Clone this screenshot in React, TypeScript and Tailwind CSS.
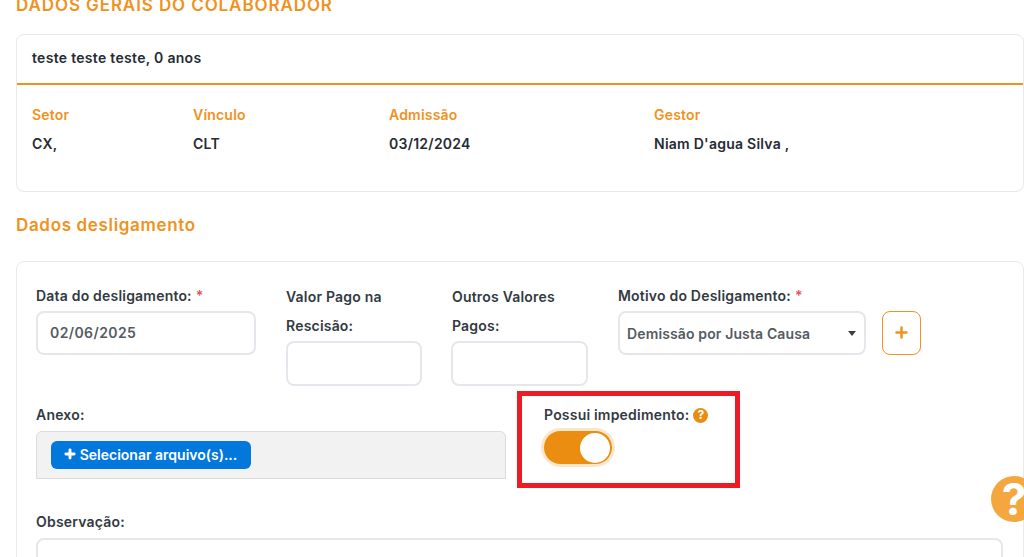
import { Plus } from "lucide-react";

const FONT = "font-['Inter','Liberation_Sans',sans-serif]";
const INPUT = "rounded-lg border-2 border-[#e4e7ec] bg-white";
const LABEL = "block text-[14px] leading-[20px] font-semibold tracking-[0.2px] text-[#333a42]";

function Required() {
  return <span className="ml-1 text-[#e8505b]">*</span>;
}

function Info({ label, value, className }: { label: string; value: string; className: string }) {
  return (
    <div className={className}>
      <div className="text-[14px] leading-[20px] font-semibold tracking-[0.2px] text-[#f0921e]">{label}</div>
      <div className="mt-[9px] text-[14px] leading-[20px] font-semibold tracking-[0.25px] text-[#262c33]">{value}</div>
    </div>
  );
}

export default function App() {
  return (
    <div className={`relative h-[557px] w-[1024px] overflow-hidden bg-white ${FONT}`}>
      <div className="pl-4">
        {/* Dados gerais */}
        <h2 className="-mt-[6px] text-[17px] leading-[22px] font-semibold tracking-[0.9px] text-[#f0921e]">
          DADOS GERAIS DO COLABORADOR
        </h2>
        <div className="mt-[18px] h-[158px] rounded-lg border border-[#e9e9e9] bg-white">
          <div className="flex h-[50px] items-center border-b-2 border-[#f0921e] pb-[4px] pl-[15px] text-[14px] font-semibold tracking-[0.3px] text-[#262c33]">
            teste teste teste, 0 anos
          </div>
          <div className="flex pt-[20px] pl-[15px]">
            <Info label="Setor" value="CX," className="w-[161px]" />
            <Info label="Vínculo" value="CLT" className="w-[196px]" />
            <Info label="Admissão" value="03/12/2024" className="w-[265px]" />
            <Info label="Gestor" value="Niam D'agua Silva ," className="w-[300px]" />
          </div>
        </div>

        {/* Dados desligamento */}
        <h2 className="mt-[21px] text-[17px] leading-[24px] font-semibold tracking-[0.66px] text-[#f0921e]">Dados desligamento</h2>
        <div className="mt-[24px] h-[320px] rounded-lg border border-[#e9e9e9] bg-white pt-[24px] pl-[19px]">
          <div className="flex items-start">
            <div className="w-[250px]">
              <label className={LABEL}>
                Data do desligamento:
                <Required />
              </label>
              <div className={`mt-[5px] flex h-[44px] w-[220px] items-center pb-[2px] pl-3 text-[14px] font-semibold tracking-[0.4px] text-[#545b63] ${INPUT}`}>
                02/06/2025
              </div>
            </div>
            <div className="-mt-1 w-[165px]">
              <label className={`${LABEL} !leading-[29px]`}>
                Valor Pago na
                <br />
                Rescisão:
              </label>
              <div className={`mt-[1px] h-[45px] w-[136px] ${INPUT}`} />
            </div>
            <div className="-mt-1 w-[167px]">
              <label className={`${LABEL} !leading-[29px] pl-px`}>
                Outros Valores
                <br />
                Pagos:
              </label>
              <div className={`mt-[1px] h-[45px] w-[137px] ${INPUT}`} />
            </div>
            <div>
              <label className={LABEL}>
                Motivo do Desligamento:
                <Required />
              </label>
              <div className="mt-[5px] flex items-center gap-4">
                <div className={`flex h-[44px] w-[248px] items-center justify-between pr-[8px] pl-[7px] text-[14px] font-semibold tracking-[0.13px] text-[#545b63] ${INPUT}`}>
                  Demissão por Justa Causa
                  <span className="h-0 w-0 border-x-[4px] border-t-[5px] border-x-transparent border-t-[#3a4048]" />
                </div>
                <div className="flex h-[44px] w-[39px] items-center justify-center rounded-lg border border-[#f0921e] pb-[2px] text-[#f0921e]">
                  <Plus size={17} strokeWidth={3.5} />
                </div>
              </div>
            </div>
          </div>

          <div className="mt-[19px] flex items-start">
            <div className="w-[508px]">
              <label className={LABEL}>Anexo:</label>
              <div className="mt-[6px] h-[48px] w-[470px] rounded-t-md border border-[#dcdcdc] bg-[#f2f2f2] pt-[9px] pl-[14px]">
                <div className="flex h-[28px] w-[200px] items-center justify-center gap-[3px] rounded-md bg-[#0277dc] pr-[2px] pb-[2px] text-[14px] font-semibold text-white">
                  <Plus size={14} strokeWidth={5} />
                  Selecionar arquivo(s)...
                </div>
              </div>
            </div>
            <div>
              <div className="flex items-center gap-1">
                <label className={LABEL}>Possui impedimento:</label>
                <span className="flex h-[15px] w-[15px] items-center justify-center rounded-full bg-[#ea8d10] text-[12px] leading-none font-bold text-white">
                  ?
                </span>
              </div>
              <div className="mt-[6px] flex h-[33px] w-[68px] items-center justify-end rounded-full bg-[#ea8d10] pr-[2px] shadow-[0_0_0_3px_#fbe6c9]">
                <span className="h-[30px] w-[30px] rounded-full bg-white" />
              </div>
            </div>
          </div>

          <label className={`${LABEL} mt-[33px]`}>Observação:</label>
          <div className={`mt-[6px] h-[60px] w-[967px] ${INPUT}`} />
        </div>
      </div>

      {/* Destaque vermelho */}
      <div className="absolute top-[391px] left-[517px] h-[97px] w-[223px] border-[5px] border-[#ed1c24]" />

      {/* Ajuda */}
      <div className="absolute top-[476px] left-[991px] flex h-[46px] w-[46px] items-center justify-center rounded-full bg-[#f5a73f] text-[44px] leading-none font-bold text-white">
        ?
      </div>
    </div>
  );
}
